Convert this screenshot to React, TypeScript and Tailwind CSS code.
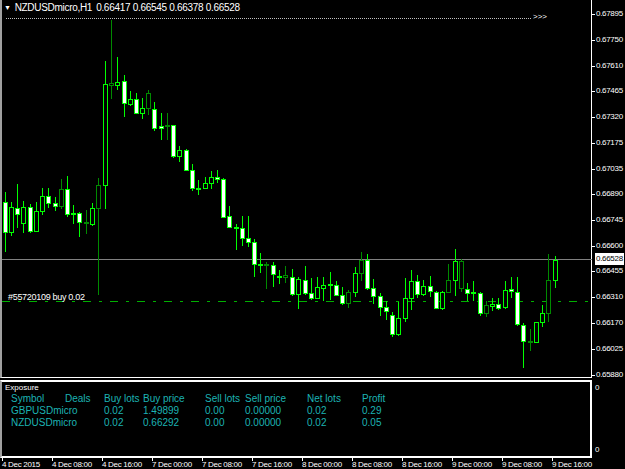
import React from "react";

type C = [number, number, number, string, number?, number?];

// x, body top, body bottom, kind (w = bear white, h = bull hollow, d = dark), high, low
const candles: C[] = [
  [3, 202, 232, "w", 192, 252], [9, 207, 232, "h", 202, 236], [15, 208, 214, "w", 184, 228],
  [21, 207, 223, "h", 201, 233], [28, 207, 231, "w", 204, 233], [34, 211, 231, "h", 202, 232],
  [40, 196, 211, "h", 188, 215], [46, 196, 203, "w", 188, 208], [53, 203, 206, "w", 197, 211],
  [59, 189, 206, "d", 179, 209], [65, 189, 214, "w", 176, 217], [71, 213, 214, "w", 205, 224],
  [77, 213, 222, "w", 212, 237], [84, 222, 223, "d", 210, 234], [90, 208, 224, "h", 203, 226],
  [96, 185, 208, "d", 178, 295], [103, 84, 185, "h", 61, 209], [109, 83, 85, "d", 20, 99],
  [115, 82, 85, "h", 57, 90], [122, 81, 103, "w", 75, 117], [128, 99, 104, "h", 91, 106],
  [134, 99, 113, "w", 93, 114], [140, 108, 113, "h", 98, 119], [146, 93, 108, "d", 90, 115],
  [152, 109, 128, "w", 102, 131], [159, 126, 128, "w", 113, 140], [165, 125, 126, "d", 113, 140],
  [171, 125, 156, "w", 134, 158], [177, 150, 156, "h", 146, 162], [184, 150, 170, "w", 149, 171],
  [190, 170, 188, "w", 164, 191], [196, 188, 189, "w", 180, 195], [203, 183, 188, "h", 177, 189],
  [209, 177, 183, "h", 171, 189], [215, 177, 179, "w", 170, 183], [221, 179, 217, "w", 178, 218],
  [227, 216, 227, "w", 206, 227], [234, 227, 228, "h", 224, 250], [240, 228, 238, "w", 216, 246],
  [246, 238, 242, "w", 216, 247], [252, 242, 264, "w", 239, 277], [258, 264, 265, "h", 253, 273],
  [264, 264, 265, "d", 262, 289], [271, 265, 274, "w", 262, 287], [277, 276, 277, "w", 270, 284],
  [283, 275, 277, "d", 266, 283], [290, 277, 294, "w", 269, 296], [296, 279, 294, "h", 277, 309],
  [303, 280, 293, "w", 266, 295], [309, 293, 298, "w", 278, 300], [315, 287, 298, "h", 277, 299],
  [321, 285, 288, "h", 277, 301], [328, 284, 285, "w", 272, 300], [334, 285, 295, "w", 281, 296],
  [340, 295, 303, "w", 287, 305], [346, 292, 303, "d", 290, 308], [353, 273, 292, "h", 267, 297],
  [359, 260, 273, "d", 252, 281], [365, 260, 288, "w", 254, 290], [371, 288, 296, "w", 279, 304],
  [378, 296, 307, "w", 293, 316], [384, 307, 311, "w", 301, 320], [390, 315, 334, "w", 312, 337],
  [396, 318, 334, "h", 302, 336], [403, 298, 318, "h", 278, 322], [409, 281, 298, "h", 270, 310],
  [415, 281, 294, "w", 275, 298], [421, 286, 294, "h", 280, 296], [428, 286, 291, "w", 276, 297],
  [434, 292, 308, "w", 291, 309], [440, 292, 308, "h", 291, 310], [446, 280, 292, "d", 264, 293],
  [453, 261, 280, "h", 249, 296], [459, 261, 288, "d", 259, 292], [465, 289, 293, "w", 283, 301],
  [471, 292, 293, "h", 281, 301], [478, 293, 313, "w", 292, 316], [484, 305, 313, "d", 301, 317],
  [490, 304, 306, "h", 298, 311], [496, 304, 308, "w", 298, 310], [503, 290, 307, "h", 281, 309],
  [509, 289, 291, "w", 277, 298], [515, 292, 324, "w", 277, 326], [521, 325, 341, "w", 323, 368],
  [528, 341, 342, "d", 329, 351], [534, 322, 342, "h", 322, 343], [540, 313, 322, "h", 305, 327],
  [546, 280, 313, "d", 254, 322], [553, 260, 280, "h", 256, 288],
];

const prices: [string, number][] = [
  ["0.67895", 14], ["0.67750", 40], ["0.67610", 66], ["0.67465", 91], ["0.67320", 117],
  ["0.67175", 143], ["0.67035", 169], ["0.66890", 194], ["0.66745", 220], ["0.66600", 246],
  ["0.66455", 271], ["0.66310", 297], ["0.66170", 323], ["0.66025", 349], ["0.65880", 375],
];

const times: [string, number][] = [
  ["4 Dec 2015", 2], ["4 Dec 08:00", 52], ["4 Dec 16:00", 102], ["7 Dec 00:00", 152],
  ["7 Dec 08:00", 202], ["7 Dec 16:00", 252], ["8 Dec 00:00", 302], ["8 Dec 08:00", 352],
  ["8 Dec 16:00", 402], ["9 Dec 00:00", 452], ["9 Dec 08:00", 502], ["9 Dec 16:00", 552],
];

const rows = [
  ["Symbol", "Deals", "Buy lots", "Buy price", "Sell lots", "Sell price", "Net lots", "Profit"],
  ["GBPUSDmicro", "", "0.02", "1.49899", "0.00", "0.00000", "0.02", "0.29"],
  ["NZDUSDmicro", "", "0.02", "0.66292", "0.00", "0.00000", "0.02", "0.05"],
];

function Chart() {
  return (
    <svg width={590} height={376} className="block" shapeRendering="crispEdges">
      <line x1={4} y1={18.5} x2={530} y2={18.5} stroke="#c0c0c0" strokeDasharray="1 1" />
      <line x1={0} y1={259.5} x2={590} y2={259.5} stroke="#808080" />
      <line x1={0} y1={301.5} x2={590} y2={301.5} stroke="#00b000" strokeDasharray="8 8 3 8" />
      {candles.map(([x, top, bot, k, hi, lo], i) => {
        const col = k === "d" ? "#008a00" : "#00ff00";
        return (
          <g key={i}>
            <line x1={x + 0.5} y1={hi} x2={x + 0.5} y2={lo} stroke={col} />
            <rect
              x={x - 1.5}
              y={top + 0.5}
              width={4}
              height={Math.max(bot - top, 1)}
              fill={k === "w" ? "#ffffff" : "#000000"}
              stroke={col}
            />
          </g>
        );
      })}
    </svg>
  );
}

export default function App() {
  return (
    <div
      className="w-[625px] h-[469px] bg-black text-white overflow-hidden flex flex-col"
      style={{ fontFamily: '"Liberation Sans", Arial, sans-serif' }}
    >
      <div className="flex h-[378px]">
        <div className="relative w-[592px] border-l-2 border-l-[#a0a0a0] border-r border-r-white border-b border-b-white">
          <Chart />
          <div className="absolute left-[2px] top-[1px] flex items-center gap-[4px] text-[10px] leading-[14px] tracking-[-0.3px]">
            <span className="text-[7px]">▼</span>
            <span>NZDUSDmicro,H1</span>
            <span>0.66417 0.66545 0.66378 0.66528</span>
          </div>
          <span className="absolute left-[531px] top-[11px] text-[8px]">&gt;&gt;&gt;</span>
          <span className="absolute left-[6px] top-[292px] text-[9px] leading-[10px] tracking-[-0.3px]">#55720109 buy 0.02</span>
        </div>
        <div className="relative flex-1">
          {prices.map(([p, y]) => (
            <div key={p} className="absolute left-0 flex items-center" style={{ top: y - 6 }}>
              <span className="w-[3px] h-px bg-white" />
              <span className="ml-[1px] text-[8px] leading-[12px] tracking-[-0.3px]">{p}</span>
            </div>
          ))}
          <span className="absolute left-[3px] top-[253px] bg-white text-black text-[8px] leading-[12px] px-[1px] tracking-[-0.3px]">
            0.66528
          </span>
        </div>
      </div>
      <div className="flex h-[78px] mt-[2px]">
        <div className="w-[592px] border-2 border-white border-l-[#a0a0a0] px-[3px] pt-[1px]">
          <div className="text-[8px] leading-[10px]">Exposure</div>
          <div className="text-[#1cb3b3] text-[10px] leading-[12px] pl-[6px]">
            {rows.map((r, i) => (
              <div key={i} className="grid grid-cols-[54px_39px_39px_62px_40px_62px_55px_60px]">
                {r.map((c, j) => (
                  <span key={j}>{c}</span>
                ))}
              </div>
            ))}
          </div>
        </div>
        <div className="flex-1 flex flex-col justify-between pl-[3px] text-[8px] leading-[10px] py-[3px]">
          <span>0</span>
          <span>0</span>
        </div>
      </div>
      <div className="relative flex-1">
        {times.map(([t, x]) => (
          <div key={t} className="absolute top-0" style={{ left: x }}>
            <div className="w-px h-[3px] bg-white" />
            <span className="absolute top-[2px] left-0 whitespace-nowrap text-[8px] leading-[10px] tracking-[-0.3px]">{t}</span>
          </div>
        ))}
      </div>
    </div>
  );
}
